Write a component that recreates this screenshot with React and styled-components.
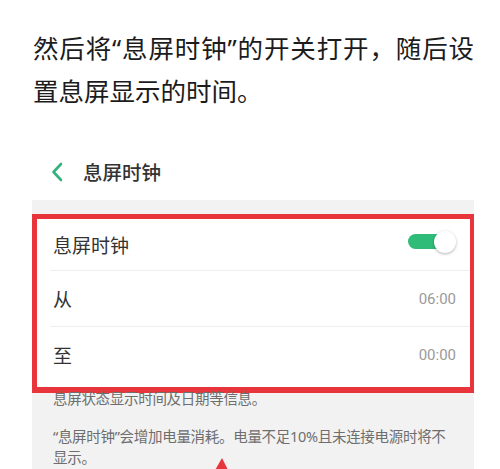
import React from "react";
import styled, { createGlobalStyle } from "styled-components";

const GlobalStyle = createGlobalStyle`
  html, body {
    margin: 0;
    padding: 0;
    background: #fff;
  }
  body {
    font-family: "Noto Sans", "Noto Sans CJK SC", sans-serif;
    overflow: hidden;
  }
`;

const Page = styled.div`
  width: 500px;
  height: 469px;
  overflow: hidden;
  position: relative;
`;

const Article = styled.p`
  margin: 0;
  padding: 27px 26px 0 33px;
  font-size: 25.5px;
  line-height: 43px;
  color: #1c1c1c;
  text-align: justify;
`;

const Shot = styled.div`
  margin: 30px 0 0 32px;
  width: 442px;
`;

const Header = styled.div`
  height: 57px;
  display: flex;
  align-items: center;
  gap: 20px;
  padding-left: 19px;
  background: #fff;
`;

const Title = styled.span`
  font-family: "Noto Sans CJK SC", sans-serif;
  font-size: 19.5px;
  font-weight: 500;
  color: #333;
`;

const Panel = styled.div`
  background: #f2f2f2;
  padding-top: 14px;
  height: 300px;
`;

const Card = styled.div`
  background: #fff;
  border: 5px solid #e8353b;
  border-right-width: 4px;
  border-bottom-width: 6px;
  padding-bottom: 5px;
`;

const Row = styled.div`
  height: ${(p) => p.$h || 55}px;
  margin-left: 13px;
  padding: 0 14px 0 3px;
  display: flex;
  align-items: center;
  justify-content: space-between;
  border-top: ${(p) => (p.$divided ? "1px solid #efefef" : "none")};
`;

const Label = styled.span`
  font-family: "Noto Sans CJK SC", sans-serif;
  font-size: 19px;
  color: #333;
`;

const Time = styled.span`
  font-family: Roboto, "Noto Sans", sans-serif;
  font-size: 15px;
  color: #9a9a9a;
`;

const Toggle = styled.span`
  position: relative;
  display: inline-block;
  width: 48px;
  height: 22px;
  margin-top: -6px;
`;

const Track = styled.span`
  position: absolute;
  left: 0;
  top: 3.5px;
  width: 42px;
  height: 15px;
  border-radius: 8px;
  background: #2fbc78;
`;

const Knob = styled.span`
  position: absolute;
  right: 0;
  top: 0;
  width: 22px;
  height: 22px;
  border-radius: 50%;
  background: #fff;
  box-shadow: 0 1px 3px rgba(0, 0, 0, 0.3);
`;

const Notes = styled.div`
  position: relative;
  padding: 0 24px 0 21px;
  font-family: "Noto Sans", "Noto Sans CJK SC", sans-serif;
  font-size: 14.5px;
  letter-spacing: -0.3px;
  line-height: 21px;
  color: #6e6e6e;
`;

const Note = styled.p`
  margin: ${(p) => (p.$first ? "-5px 0 0" : "17px 0 0")};
`;

const Arrow = styled.svg`
  position: absolute;
  left: 180px;
  top: 70px;
`;

function Chevron() {
  return (
    <svg width="12" height="20" viewBox="0 0 12 20">
      <polyline
        points="10,2 2.5,10 10,18"
        fill="none"
        stroke="#35b27c"
        strokeWidth="2.6"
        strokeLinecap="round"
        strokeLinejoin="round"
      />
    </svg>
  );
}

export default function App() {
  return (
    <Page>
      <GlobalStyle />
      <Article>然后将“息屏时钟”的开关打开，随后设置息屏显示的时间。</Article>
      <Shot>
        <Header>
          <Chevron />
          <Title>息屏时钟</Title>
        </Header>
        <Panel>
          <Card>
            <Row $h={51}>
              <Label>息屏时钟</Label>
              <Toggle>
                <Track />
                <Knob />
              </Toggle>
            </Row>
            <Row $divided>
              <Label>从</Label>
              <Time>06:00</Time>
            </Row>
            <Row $divided>
              <Label>至</Label>
              <Time>00:00</Time>
            </Row>
          </Card>
          <Notes>
            <Note $first>息屏状态显示时间及日期等信息。</Note>
            <Note>“息屏时钟”会增加电量消耗。电量不足10%且未连接电源时将不显示。</Note>
            <Arrow width="20" height="14" viewBox="0 0 20 14">
              <polygon points="10,0 2,14 17,14" fill="#e8353b" />
            </Arrow>
          </Notes>
        </Panel>
      </Shot>
    </Page>
  );
}
